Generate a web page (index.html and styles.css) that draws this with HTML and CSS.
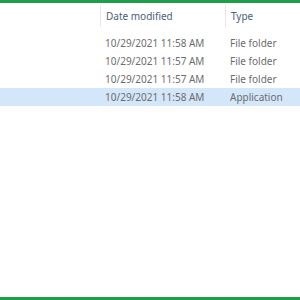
FILE: index.html
```html
<!DOCTYPE html>
<html lang="en">
<head>
  <meta charset="UTF-8">
  <title>Files</title>
  <link rel="stylesheet" href="styles.css">
</head>
<body>

<div class="frame">
  <div class="header">
    <div class="col name"></div>
    <div class="col date"><span>Date modified</span></div>
    <div class="col type"><span>Type</span></div>
  </div>

  <div class="rows">
    <div class="row">
      <div class="col name"></div>
      <div class="col date">10/29/2021 11:58 AM</div>
      <div class="col type">File folder</div>
    </div>
    <div class="row">
      <div class="col name"></div>
      <div class="col date">10/29/2021 11:57 AM</div>
      <div class="col type">File folder</div>
    </div>
    <div class="row">
      <div class="col name"></div>
      <div class="col date">10/29/2021 11:57 AM</div>
      <div class="col type">File folder</div>
    </div>
    <div class="row selected">
      <div class="col name"></div>
      <div class="col date">10/29/2021 11:58 AM</div>
      <div class="col type">Application</div>
    </div>
  </div>
</div>

</body>
</html>
```

FILE: styles.css
```css
html, body {
  margin: 0;
  padding: 0;
}

body {
  font-family: "Noto Sans", "Open Sans", sans-serif;
  font-size: 10px;
  background-color: #ffffff;
}

.frame {
  box-sizing: border-box;
  width: 300px;
  height: 300px;
  border-top: 3px solid #1e9e4a;
  border-bottom: 3px solid #1e9e4a;
  display: flex;
  flex-direction: column;
}

.header {
  display: flex;
  height: 22px;
  margin-top: 2px;
  color: #4c607a;
}

.header .col {
  display: flex;
  align-items: center;
}

.header .date,
.header .type {
  border-left: 1px solid #e8e8e8;
}

.col.name {
  width: 100px;
}

.col.date {
  width: 125px;
  padding-left: 5px;
  box-sizing: border-box;
}

.col.type {
  flex: 1;
  padding-left: 5px;
}

.rows {
  margin-top: 7px;
}

.row {
  display: flex;
  align-items: center;
  height: 18px;
  color: #6d6d6d;
}

.row.selected {
  background-color: #d3e6fa;
}
```
